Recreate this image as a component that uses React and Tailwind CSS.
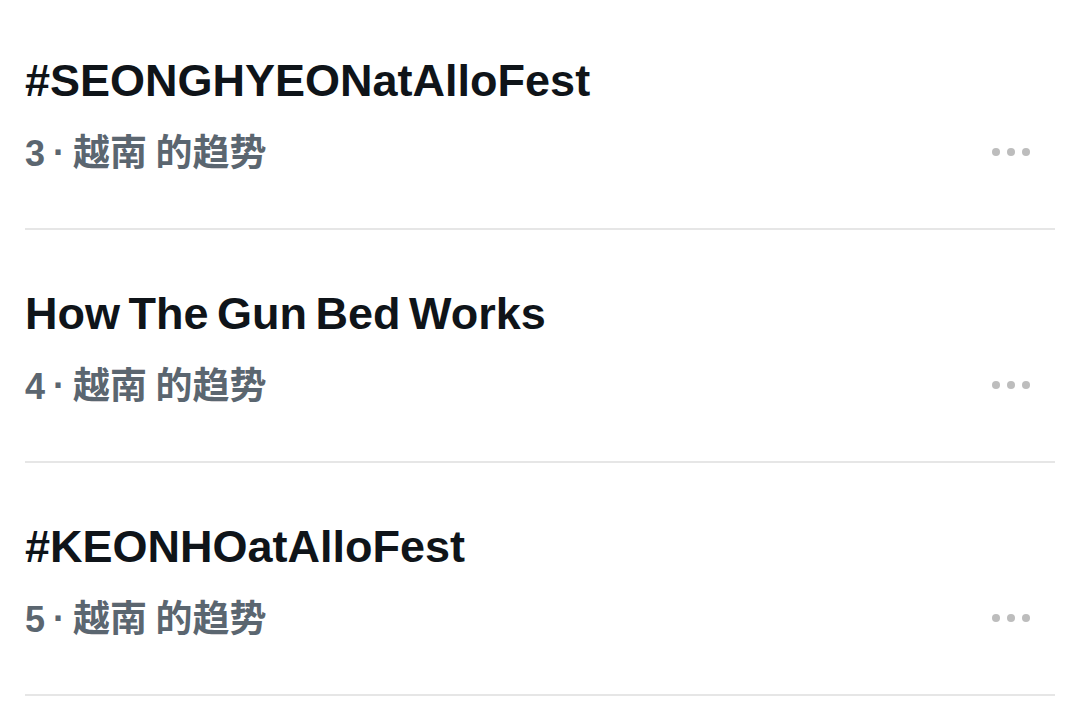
import React from "react";

const trends = [
  { rank: 3, title: "#SEONGHYEONatAlloFest" },
  { rank: 4, title: "How The Gun Bed Works" },
  { rank: 5, title: "#KEONHOatAlloFest" },
];

const MoreDots = () => (
  <div className="flex items-center gap-[7px] pr-[25px]">
    <span className="w-[8px] h-[8px] rounded-full bg-[#bdbdbd]" />
    <span className="w-[8px] h-[8px] rounded-full bg-[#bdbdbd]" />
    <span className="w-[8px] h-[8px] rounded-full bg-[#bdbdbd]" />
  </div>
);

const TrendRow = ({ rank, title }) => (
  <div className="h-[233px] border-b-2 border-[#e6e6e6] pt-[58px]">
    <div className="text-[45px] leading-[52px] font-bold text-[#0f1419] [word-spacing:-4px] font-['Liberation_Sans','Noto_Sans_CJK_SC',sans-serif]">
      {title}
    </div>
    <div className="mt-[21px] flex items-center justify-between">
      <div className="flex items-baseline text-[36px] leading-[44px] font-bold text-[#5b6670] font-['Liberation_Sans','Noto_Sans_CJK_SC',sans-serif]">
        <span>{rank}</span>
        <span className="relative -top-[1px] ml-[8px] mr-[8px]">·</span>
        <span className="text-[37px] font-['Noto_Sans_CJK_SC',sans-serif] whitespace-pre">越南 的趋势</span>
      </div>
      <MoreDots />
    </div>
  </div>
);

const App = () => {
  return (
    <div className="w-[1080px] h-[701px] overflow-hidden bg-white">
      <div className="-mt-[3px] px-[25px]">
        {trends.map((t) => (
          <TrendRow key={t.rank} rank={t.rank} title={t.title} />
        ))}
      </div>
    </div>
  );
};

export default App;
